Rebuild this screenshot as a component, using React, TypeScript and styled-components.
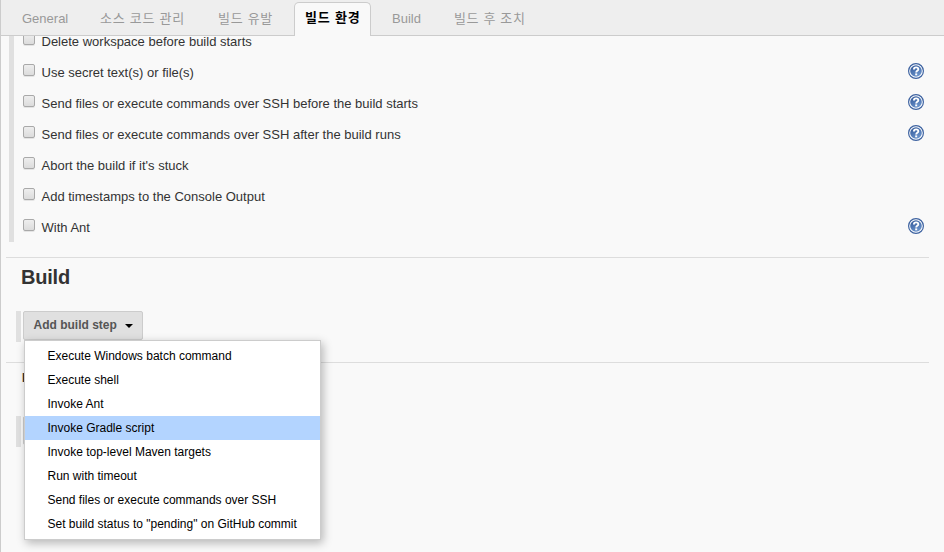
import React from "react";
import styled, { createGlobalStyle, css } from "styled-components";

const GlobalStyle = createGlobalStyle`
  * { box-sizing: border-box; }
  body {
    margin: 0;
    background: #f9f9f9;
    color: #333;
    font: 13px "Liberation Sans", "Noto Sans CJK KR", sans-serif;
  }
`;

const Page = styled.div`
  display: flex;
  flex-direction: column;
  height: 552px;
  overflow: hidden;
  border-left: 1px solid #ccc;
  background: #f9f9f9;
`;

const TabBar = styled.nav`
  flex: none;
  display: flex;
  height: 36px;
  padding: 2px 0 0 10px;
  background: #eee;
  border-bottom: 1px solid #ccc;
  z-index: 1;
`;

const Tab = styled.div<{ $width: number; $active?: boolean; $spacing?: number }>`
  width: ${(p) => p.$width}px;
  height: 33px;
  padding-left: 11px;
  line-height: 33px;
  color: #999;
  white-space: nowrap;
  letter-spacing: ${(p) => p.$spacing ?? 0}px;
  ${(p) =>
    p.$active &&
    css`
      height: 34px;
      padding-left: 10px;
      line-height: 30px;
      margin-right: 10px;
      color: #000;
      font-weight: bold;
      background: #f9f9f9;
      border: 1px solid #ccc;
      border-bottom: 0;
      border-radius: 5px 5px 0 0;
    `}
`;

const Options = styled.section`
  flex: none;
  margin: -11px 0 0 8px;
  width: 920px;
  border-left: 5px solid #e0e0e0;
`;

const OptionRow = styled.label`
  display: flex;
  align-items: center;
  height: 31px;
  padding: 0 5px 0 9px;
`;

const Checkbox = styled.input`
  appearance: none;
  flex: none;
  width: 12px;
  height: 12px;
  margin: -4px 6.5px 0 0;
  border: 1px solid #a9a9a9;
  border-radius: 2px;
  background: linear-gradient(#eee, #dcdcdc);
  box-shadow: 0 1px 0 #e4e4e4;
`;

const OptionText = styled.span`
  flex: 1;
  padding-top: 3px;
  line-height: 16px;
  white-space: nowrap;
`;

const HelpSvg = styled.svg`
  flex: none;
  width: 16px;
  height: 16px;
  margin-top: -2px;
`;

const Divider = styled.div`
  flex: none;
  width: 923px;
  height: 1px;
  margin-left: 5px;
  background: #ddd;
`;

const Heading = styled.h2`
  flex: none;
  height: 53px;
  margin: 0 0 0 20px;
  font-size: 20px;
  line-height: 38px;
  letter-spacing: -0.2px;
`;

const PostHeading = styled(Heading)`
  line-height: 40px;
`;

const StepBlock = styled.div`
  flex: none;
  position: relative;
  height: 31px;
  margin-left: 15px;
  padding-left: 2px;
  border-left: 5px solid #e0e0e0;
`;

const StepButton = styled.button`
  display: flex;
  align-items: center;
  width: 120px;
  height: 29px;
  padding: 0 0 1px 9.5px;
  gap: 8.5px;
  border: 1px solid #ccc;
  border-radius: 2px;
  background: #e0e0e0;
  color: #555;
  font: bold 12px "Liberation Sans", "Noto Sans CJK KR", sans-serif;
  white-space: nowrap;
`;

const Caret = styled.span`
  margin-top: 2px;
  border: 4px solid transparent;
  border-top-color: #000;
  border-bottom: 0;
`;

const Menu = styled.ul`
  position: absolute;
  left: 3px;
  top: 29px;
  z-index: 2;
  width: 297px;
  margin: 0;
  padding: 3px 0;
  list-style: none;
  border: 1px solid #ccc;
  background: #fff;
  box-shadow: 2px 3px 9px rgba(0, 0, 0, 0.28);
`;

const MenuItem = styled.li<{ $selected: boolean }>`
  height: 24px;
  padding-left: 22.5px;
  font-size: 12px;
  line-height: 24px;
  color: #000;
  white-space: nowrap;
  background: ${(p) => (p.$selected ? "#b3d4ff" : "transparent")};
`;

const Spacer = styled.div<{ $h: number }>`
  flex: none;
  height: ${(p) => p.$h}px;
`;

const HelpIcon = () => (
  <HelpSvg viewBox="0 0 16 16" aria-label="Help">
    <defs>
      <linearGradient id="helpFill" x1="0" y1="0" x2="0.6" y2="1">
        <stop offset="0" stopColor="#2f5596" />
        <stop offset="1" stopColor="#6b94cc" />
      </linearGradient>
    </defs>
    <circle cx="8" cy="8" r="7.4" fill="#fff" stroke="#3d62a0" strokeWidth="1.2" />
    <circle cx="8" cy="8" r="5.8" fill="url(#helpFill)" />
    <path d="M5.9 6.4C5.9 3.7 10.3 3.7 10.3 6.2C10.3 7.8 8.2 7.8 8.2 9.4" fill="none" stroke="#fff" strokeWidth="1.9" />
    <rect x="7.2" y="10.4" width="2" height="1.9" fill="#fff" />
  </HelpSvg>
);

const tabs = [
  { label: "General", width: 78 },
  { label: "소스 코드 관리", width: 118, spacing: 0.75 },
  { label: "빌드 유발", width: 87, spacing: 0.7 },
  { label: "빌드 환경", width: 77, spacing: 0.8, active: true },
  { label: "Build", width: 62 },
  { label: "빌드 후 조치", width: 100, spacing: 0.65 },
];

const options = [
  { label: "Delete workspace before build starts", help: false },
  { label: "Use secret text(s) or file(s)", help: true },
  { label: "Send files or execute commands over SSH before the build starts", help: true },
  { label: "Send files or execute commands over SSH after the build runs", help: true },
  { label: "Abort the build if it's stuck", help: false },
  { label: "Add timestamps to the Console Output", help: false },
  { label: "With Ant", help: true },
];

const steps = [
  "Execute Windows batch command",
  "Execute shell",
  "Invoke Ant",
  "Invoke Gradle script",
  "Invoke top-level Maven targets",
  "Run with timeout",
  "Send files or execute commands over SSH",
  'Set build status to "pending" on GitHub commit',
];

export default function App() {
  return (
    <>
      <GlobalStyle />
      <Page>
        <TabBar>
          {tabs.map((t) => (
            <Tab key={t.label} $width={t.width} $active={t.active} $spacing={t.spacing}>
              {t.label}
            </Tab>
          ))}
        </TabBar>
        <Options>
          {options.map((o) => (
            <OptionRow key={o.label}>
              <Checkbox type="checkbox" />
              <OptionText>{o.label}</OptionText>
              {o.help && <HelpIcon />}
            </OptionRow>
          ))}
        </Options>
        <Spacer $h={15} />
        <Divider />
        <Heading>Build</Heading>
        <StepBlock>
          <StepButton>
            Add build step
            <Caret />
          </StepButton>
          <Menu>
            {steps.map((s) => (
              <MenuItem key={s} $selected={s === "Invoke Gradle script"}>
                {s}
              </MenuItem>
            ))}
          </Menu>
        </StepBlock>
        <Spacer $h={20} />
        <Divider />
        <PostHeading>빌드 후 조치</PostHeading>
        <StepBlock>
          <StepButton />
        </StepBlock>
      </Page>
    </>
  );
}
